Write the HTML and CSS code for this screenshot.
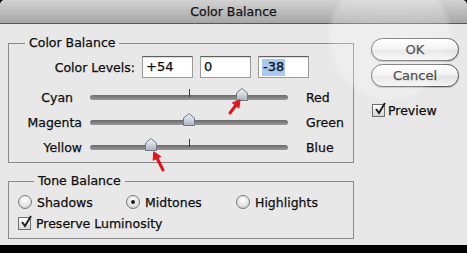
FILE: index.html
```html
<!DOCTYPE html>
<html lang="en">
  <head>
    <meta charset="UTF-8" />
    <title>Color Balance</title>
    <link rel="stylesheet" href="styles.css">
  </head>
  <body>
    <div class="dialog">
      <div class="titlebar">Color Balance</div>
      <div class="content">
        <div class="groups">
          <fieldset class="group balance">
            <legend>Color Balance</legend>
            <div class="levels">
              <span class="levels-label">Color Levels:</span>
              <div class="field">+54</div>
              <div class="field">0</div>
              <div class="field"><span class="selected">-38</span></div>
            </div>
            <div class="slider-row">
              <span class="side-left cyan">Cyan</span>
              <div class="track">
                <span class="tick"></span>
                <svg class="thumb" style="left: 77%" viewBox="0 0 12 13" width="12" height="13">
                  <defs>
                    <linearGradient id="tg" x1="0" y1="0" x2="0" y2="1">
                      <stop offset="0" stop-color="#f2f5f8" />
                      <stop offset="1" stop-color="#a9b5c2" />
                    </linearGradient>
                  </defs>
                  <polygon points="6,0.5 11.5,5 11.5,12.5 0.5,12.5 0.5,5" fill="url(#tg)" stroke="#6f7985" />
                </svg>
              </div>
              <span class="side-right">Red</span>
            </div>
            <div class="slider-row">
              <span class="side-left">Magenta</span>
              <div class="track">
                <span class="tick"></span>
                <svg class="thumb" style="left: 50%" viewBox="0 0 12 13" width="12" height="13">
                  <polygon points="6,0.5 11.5,5 11.5,12.5 0.5,12.5 0.5,5" fill="url(#tg)" stroke="#6f7985" />
                </svg>
              </div>
              <span class="side-right">Green</span>
            </div>
            <div class="slider-row">
              <span class="side-left">Yellow</span>
              <div class="track">
                <span class="tick"></span>
                <svg class="thumb" style="left: 31%" viewBox="0 0 12 13" width="12" height="13">
                  <polygon points="6,0.5 11.5,5 11.5,12.5 0.5,12.5 0.5,5" fill="url(#tg)" stroke="#6f7985" />
                </svg>
              </div>
              <span class="side-right">Blue</span>
            </div>
          </fieldset>

          <fieldset class="group tone">
            <legend>Tone Balance</legend>
            <div class="radios">
              <label class="option"><span class="radio"></span>Shadows</label>
              <label class="option"><span class="radio on"></span>Midtones</label>
              <label class="option"><span class="radio"></span>Highlights</label>
            </div>
            <label class="option check-row">
              <span class="box">
                <svg viewBox="0 0 14 14" width="14" height="14"><path d="M3 7 L6 11 L12 1" fill="none" stroke="#222" stroke-width="2" /></svg>
              </span>Preserve Luminosity
            </label>
          </fieldset>
        </div>

        <div class="actions">
          <button class="pill" type="button">OK</button>
          <button class="pill" type="button">Cancel</button>
          <label class="option preview">
            <span class="box">
              <svg viewBox="0 0 14 14" width="14" height="14"><path d="M3 7 L6 11 L12 1" fill="none" stroke="#222" stroke-width="2" /></svg>
            </span>Preview
          </label>
        </div>
      </div>

      <!-- red pointers drawn over the sliders -->
      <svg class="arrows" viewBox="0 0 467 253" width="467" height="253">
        <g fill="#e2141c" stroke="#e2141c" stroke-linecap="round">
          <line x1="230" y1="113" x2="235.7" y2="105.5" stroke-width="3" />
          <polygon points="240,100 238.9,108 232.6,103.1" stroke-width="1" />
          <line x1="163" y1="170" x2="157.1" y2="158.3" stroke-width="3" />
          <polygon points="154,152 160.7,156.5 153.5,160.1" stroke-width="1" />
        </g>
      </svg>
    </div>
  </body>
</html>
```

FILE: styles.css
```css
* {
  font-family: "DejaVu Sans", sans-serif;
  box-sizing: border-box;
}
body {
  margin: 0;
  background-color: #000;
  width: 467px;
  height: 253px;
  overflow: hidden;
}
.dialog {
  position: relative;
  width: 467px;
  height: 245px;
  background-color: #e8e8e8;
  border-radius: 5px 5px 0 0;
  overflow: hidden;
  font-size: 12.5px;
  color: #0e0e0e;
  -webkit-text-stroke: 0.25px #0e0e0e;
}
/* the light patch from the photo */
.dialog::after {
  content: "";
  position: absolute;
  inset: 0;
  pointer-events: none;
  background: radial-gradient(
    circle 64px at 390px 38px,
    rgba(255, 255, 255, 0.3) 0,
    rgba(255, 255, 255, 0.24) 58px,
    rgba(255, 255, 255, 0) 64px
  );
}
.titlebar {
  height: 24px;
  border-bottom: 1px solid #575757;
  background-image: linear-gradient(to bottom, #d2d2d2, #a7a7a7);
  text-align: center;
  line-height: 23px;
  color: #151515;
}
.content {
  display: flex;
}
.groups {
  width: 346px;
  margin-left: 8px;
}
.group {
  margin: 0;
  padding: 0;
  border: 1px solid #8a8a8a;
  min-width: 0;
}
.group legend {
  margin-left: 16px;
  padding: 0 4px;
  line-height: 14px;
}
.balance {
  margin-top: 12px;
  padding-bottom: 2px;
}
.levels {
  display: flex;
  align-items: center;
  margin: 6px 0 7px;
  gap: 7px;
}
.levels-label {
  width: 126px;
  text-align: right;
}
.field {
  width: 51px;
  height: 22px;
  background-color: #fff;
  border: 1px solid #9a9a9a;
  border-top-color: #5e5e5e;
  box-shadow: inset 0 1px 1px rgba(0, 0, 0, 0.15);
  padding: 2px 3px;
  font-size: 13px;
  line-height: 16px;
}
.selected {
  background-color: #a8c8f4;
  padding: 0 1px;
  display: inline-block;
  height: 17px;
}
.slider-row {
  display: flex;
  align-items: center;
  height: 25px;
}
.side-left {
  width: 73px;
  text-align: right;
}
.cyan {
  padding-right: 9px;
}
.track {
  position: relative;
  width: 198px;
  height: 5px;
  margin-left: 8px;
  border-radius: 3px;
  background-image: linear-gradient(to bottom, #6a6a6a, #999);
}
.tick {
  position: absolute;
  left: 99px;
  top: -6px;
  width: 1px;
  height: 8px;
  background-color: #3c3c3c;
}
.thumb {
  position: absolute;
  top: -7px;
  transform: translateX(-50%);
}
.side-right {
  margin-left: 18px;
}
.tone {
  margin-top: 11px;
  padding: 5px 0 6px 9px;
}
.radios {
  display: grid;
  grid-template-columns: 108px 110px 1fr;
  height: 18px;
  align-items: center;
}
.option {
  display: flex;
  align-items: center;
  gap: 5px;
}
.radio {
  width: 14px;
  height: 14px;
  border-radius: 50%;
  border: 1px solid #7a7a7a;
  background-image: radial-gradient(circle at 50% 35%, #ffffff, #e4e4e4 55%, #bdbdbd);
  display: flex;
  align-items: center;
  justify-content: center;
}
.radio.on::before {
  content: "";
  width: 4px;
  height: 4px;
  border-radius: 50%;
  background-color: #1e1e1e;
}
.check-row {
  height: 18px;
  margin-top: 3px;
}
.box {
  position: relative;
  width: 13px;
  height: 13px;
  border: 1px solid #6e6e6e;
  background-image: linear-gradient(to bottom, #ffffff, #d6d6d6);
}
.box svg {
  position: absolute;
  left: 0;
  top: -3px;
}
.actions {
  margin-left: 17px;
  padding-top: 14px;
  display: flex;
  flex-direction: column;
}
.pill {
  width: 88px;
  height: 23px;
  margin: 0 0 3px 0;
  padding: 0;
  border: 1px solid #585858;
  border-radius: 12px;
  background-image: linear-gradient(to bottom, #ffffff, #f1f1f1 45%, #e2e2e2 55%, #f4f4f4);
  box-shadow: 0 1px 1px rgba(0, 0, 0, 0.2);
  font-size: 13px;
  color: #111;
  -webkit-text-stroke: 0.25px #111;
}
.preview {
  margin-top: 13px;
  margin-left: 1px;
  gap: 3px;
}
.arrows {
  position: absolute;
  left: 0;
  top: 0;
  pointer-events: none;
}
```
